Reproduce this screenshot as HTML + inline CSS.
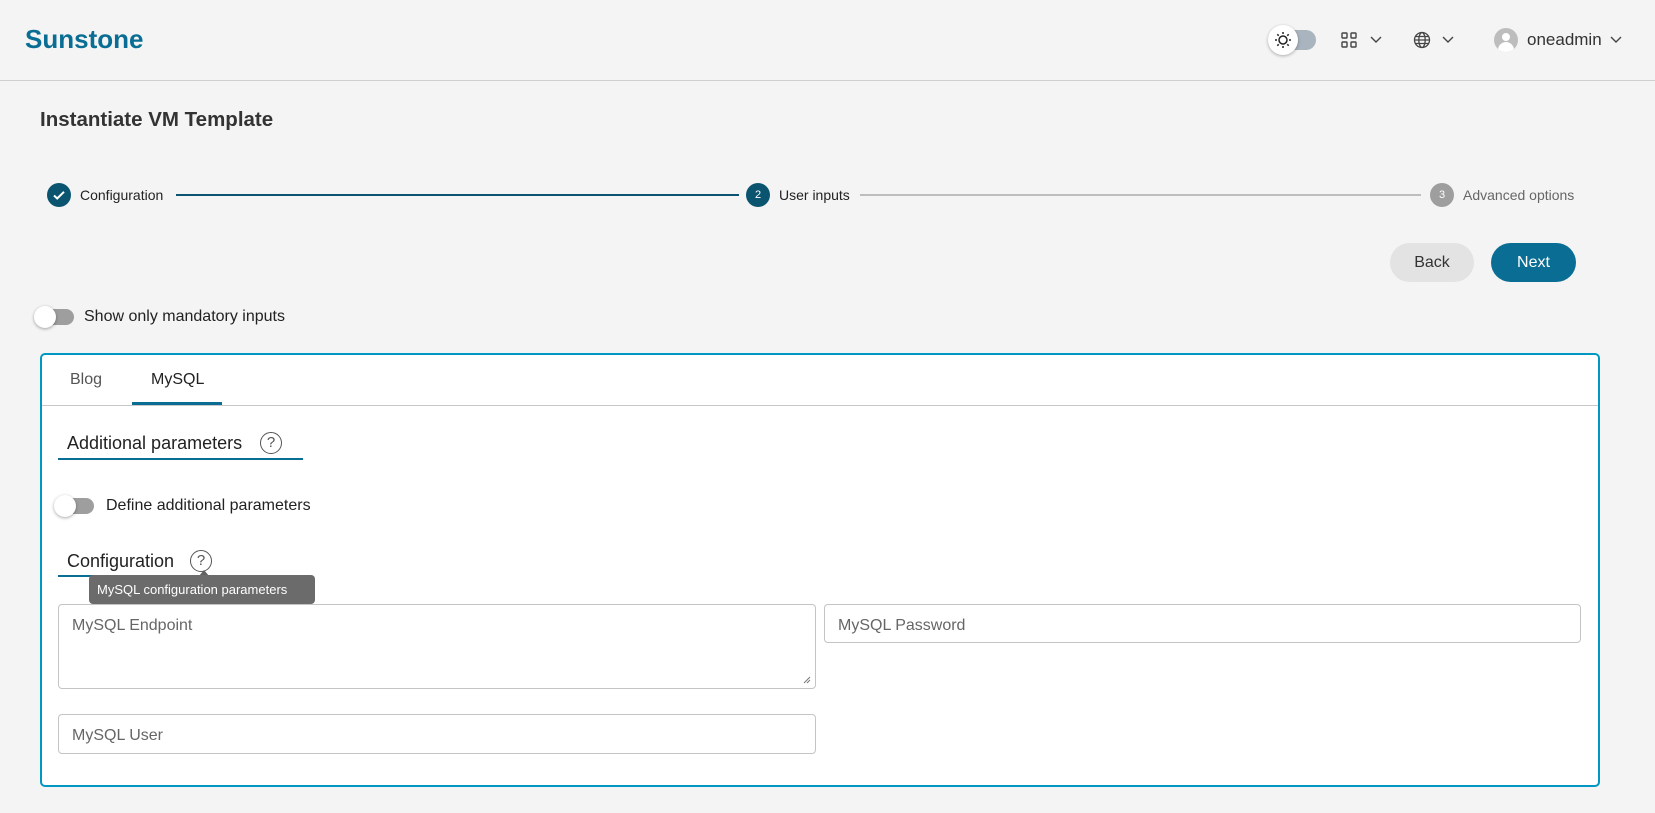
<!DOCTYPE html>
<html><head><meta charset="utf-8">
<style>
*{box-sizing:border-box;margin:0;padding:0}
body{width:1655px;height:813px;background:#f4f4f4;font-family:"Liberation Sans",sans-serif;color:#222;position:relative;overflow:hidden}
.a{position:absolute}
.t{position:absolute;white-space:nowrap;line-height:1}
.sw{position:absolute;width:38px;height:16px;border-radius:8px;background:#9e9e9e}
.sw::before{content:"";position:absolute;left:-2px;top:-3px;width:22px;height:22px;border-radius:50%;background:#fff;box-shadow:0 1px 3px rgba(0,0,0,.35)}
.inp{position:absolute;border:1px solid #c4c4c4;border-radius:4px;background:#fff}
.inp span{position:absolute;left:13px;top:12px;font-size:16px;color:#666}
.q{position:absolute;width:22px;height:22px;border:1.5px solid #555;border-radius:50%;font-size:15px;text-align:center;line-height:20px;color:#555}
</style></head><body>
<div class="t" style="left:25px;top:26px;font-size:26px;font-weight:bold;color:#0a6e94">Sunstone</div>
<div class="a" style="left:0;top:80px;width:1655px;height:1px;background:#cfcfcf"></div>
<div class="a" style="left:1272px;top:30px;width:44px;height:20px;border-radius:10px;background:#a9b4bf"></div>
<div class="a" style="left:1268px;top:25px;width:30px;height:30px;border-radius:50%;background:#fff;box-shadow:0 1px 3px rgba(0,0,0,.3)"></div>
<svg class="a" style="left:1273px;top:30px" width="20" height="20" viewBox="0 0 20 20" stroke="#222" stroke-width="1.5" fill="none"><circle cx="10" cy="10" r="4"/><path d="M10 2v2M10 16v2M2 10h2M16 10h2M4.3 4.3l1.4 1.4M14.3 14.3l1.4 1.4M4.3 15.7l1.4-1.4M14.3 5.7l1.4-1.4"/></svg>
<svg class="a" style="left:1341px;top:32px" width="16" height="16" viewBox="0 0 16 16" stroke="#444" stroke-width="1.4" fill="none"><rect x="1" y="1" width="5" height="5" rx=".8"/><rect x="10" y="1" width="5" height="5" rx=".8"/><rect x="1" y="10" width="5" height="5" rx=".8"/><rect x="10" y="10" width="5" height="5" rx=".8"/></svg>
<svg class="a" style="left:1370px;top:36px" width="12" height="8" viewBox="0 0 12 8" stroke="#444" stroke-width="1.4" fill="none"><path d="M1 1l5 5 5-5"/></svg>
<svg class="a" style="left:1413px;top:31px" width="18" height="18" viewBox="0 0 18 18" stroke="#444" stroke-width="1.3" fill="none"><circle cx="9" cy="9" r="7.5"/><ellipse cx="9" cy="9" rx="3.2" ry="7.5"/><path d="M1.5 9h15M2.5 5.5h13M2.5 12.5h13"/></svg>
<svg class="a" style="left:1442px;top:36px" width="12" height="8" viewBox="0 0 12 8" stroke="#444" stroke-width="1.4" fill="none"><path d="M1 1l5 5 5-5"/></svg>
<div class="a" style="left:1494px;top:28px;width:24px;height:24px;border-radius:50%;background:#bdbdbd;overflow:hidden"><div class="a" style="left:8px;top:5px;width:8px;height:8px;border-radius:50%;background:#fff"></div><div class="a" style="left:4px;top:14px;width:16px;height:10px;border-radius:8px 8px 0 0;background:#fff"></div></div>
<div class="t" style="left:1527px;top:31px;font-size:17px;color:#333">oneadmin</div>
<svg class="a" style="left:1610px;top:36px" width="12" height="8" viewBox="0 0 12 8" stroke="#444" stroke-width="1.4" fill="none"><path d="M1 1l5 5 5-5"/></svg>

<div class="t" style="left:40px;top:110px;font-size:20.5px;font-weight:bold;color:#333">Instantiate VM Template</div>

<div class="a" style="left:47px;top:183px;width:24px;height:24px;border-radius:50%;background:#0b5470"></div>
<svg class="a" style="left:51px;top:187px" width="16" height="16" viewBox="0 0 16 16" stroke="#fff" stroke-width="2" fill="none"><path d="M3 8.5l3.2 3L13 4.8"/></svg>
<div class="t" style="left:80px;top:188px;font-size:14px;color:#222">Configuration</div>
<div class="a" style="left:176px;top:194px;width:563px;height:2px;background:#0b5470"></div>
<div class="a" style="left:746px;top:183px;width:24px;height:24px;border-radius:50%;background:#0b5470;color:#fff;font-size:11px;text-align:center;line-height:24px">2</div>
<div class="t" style="left:779px;top:188px;font-size:14px;color:#222">User inputs</div>
<div class="a" style="left:860px;top:194px;width:561px;height:1.5px;background:#bdbdbd"></div>
<div class="a" style="left:1430px;top:183px;width:24px;height:24px;border-radius:50%;background:#9e9e9e;color:#fff;font-size:11px;text-align:center;line-height:24px">3</div>
<div class="t" style="left:1463px;top:188px;font-size:14px;color:#666">Advanced options</div>

<div class="a" style="left:1390px;top:243px;width:84px;height:39px;border-radius:20px;background:#e3e3e3;color:#333;font-size:16px;text-align:center;line-height:39px">Back</div>
<div class="a" style="left:1491px;top:243px;width:85px;height:39px;border-radius:20px;background:#0a6e94;color:#fff;font-size:16px;text-align:center;line-height:39px">Next</div>

<div class="sw" style="left:36px;top:309px"></div>
<div class="t" style="left:84px;top:309px;font-size:16px;color:#222">Show only mandatory inputs</div>

<div class="a" style="left:40px;top:353px;width:1560px;height:434px;border:2px solid #0098c3;border-radius:5px;background:#fff"></div>
<div class="t" style="left:70px;top:372px;font-size:16px;color:#555">Blog</div>
<div class="t" style="left:151px;top:372px;font-size:16px;color:#222">MySQL</div>
<div class="a" style="left:42px;top:405px;width:1556px;height:1px;background:#c8c8c8"></div>
<div class="a" style="left:132px;top:402px;width:90px;height:3px;background:#0a6e94"></div>

<div class="t" style="left:67px;top:434px;font-size:18px;color:#222">Additional parameters</div>
<div class="q" style="left:260px;top:432px">?</div>
<div class="a" style="left:58px;top:458px;width:245px;height:2px;background:#0a6e94"></div>

<div class="sw" style="left:56px;top:498px"></div>
<div class="t" style="left:106px;top:498px;font-size:16px;color:#222">Define additional parameters</div>

<div class="t" style="left:67px;top:552px;font-size:18px;color:#222">Configuration</div>
<div class="q" style="left:190px;top:550px">?</div>
<div class="a" style="left:58px;top:575px;width:176px;height:2px;background:#0a6e94"></div>
<div class="a" style="left:199px;top:570px;width:0;height:0;border-left:5px solid transparent;border-right:5px solid transparent;border-bottom:6px solid #616161"></div>
<div class="a" style="left:89px;top:575px;width:226px;height:29px;border-radius:4px;background:#6b6b6b;color:#fff;font-size:13px;line-height:29px;padding-left:8px;white-space:nowrap">MySQL configuration parameters</div>

<div class="inp" style="left:58px;top:604px;width:758px;height:85px"><span>MySQL Endpoint</span>
<svg class="a" style="right:4px;bottom:4px" width="8" height="8" viewBox="0 0 8 8" stroke="#777" fill="none"><path d="M1 7L7 1M4 7L7 4"/></svg></div>
<div class="inp" style="left:824px;top:604px;width:757px;height:39px"><span>MySQL Password</span></div>
<div class="inp" style="left:58px;top:714px;width:758px;height:40px"><span>MySQL User</span></div>
</body></html>
